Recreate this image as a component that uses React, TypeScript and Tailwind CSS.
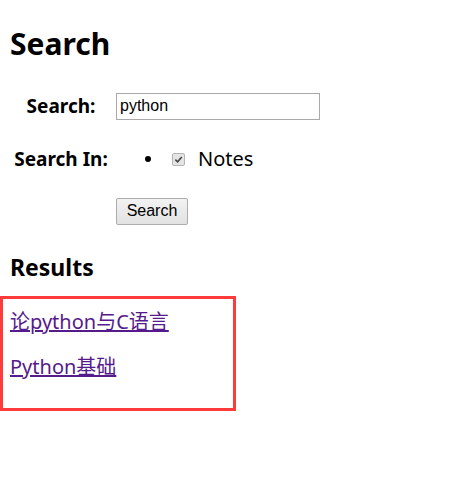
export default function App() {
  return (
    <div className="min-h-screen bg-white pl-[10px] pt-[24px] text-black" style={{ fontFamily: '"Noto Sans", "Noto Sans CJK SC", sans-serif' }}>
      {/* --- Search form --- */}
      <h1 className="text-[30px] font-bold leading-[40px]">Search</h1>

      <div className="mt-[18px] grid grid-cols-[102px_auto] items-center">
        <div className="flex h-[48px] items-center justify-center text-[19px] font-bold">Search:</div>
        <div className="flex h-[48px] items-center pl-[4px]">
          <input
            type="text"
            defaultValue="python"
            className="h-[27px] w-[204px] border border-[#a9a9a9] px-[3px] text-[16px] outline-none"
            style={{ fontFamily: '"Liberation Sans", Arial, sans-serif' }}
          />
        </div>

        <div className="flex h-[58px] items-center justify-center text-[19px] font-bold">Search In:</div>
        <div className="flex h-[58px] items-center pl-[4px]">
          <div className="flex items-center pl-[29px] text-[20px]">
            <span className="h-[6px] w-[6px] rounded-full bg-black" />
            <span className="ml-[21px] mr-[13px] flex h-[13px] w-[13px] items-center justify-center rounded-[2px] border border-[#b5b5b5] bg-[#e4e4e4]">
              <svg viewBox="0 0 10 10" className="h-[9px] w-[9px]">
                <path d="M1.5 5.2 L4 7.6 L8.6 2.2" fill="none" stroke="#444" strokeWidth="1.8" />
              </svg>
            </span>
            Notes
          </div>
        </div>

        <div />
        <div className="flex h-[46px] items-center pl-[4px]">
          <button
            className="h-[27px] w-[72px] rounded-[2px] border border-[#adadad] bg-gradient-to-b from-[#f2f2f2] to-[#e2e2e2] text-[16px]"
            style={{ fontFamily: '"Liberation Sans", Arial, sans-serif' }}
          >
            Search
          </button>
        </div>
      </div>

      {/* --- Results --- */}
      <h3 className="mt-[19px] text-[23px] font-bold leading-[28px]">Results</h3>

      <div className="-ml-[10px] mt-[15px] w-[236px] border-[3px] border-[#ff3b3b] pb-[27px] pl-[7px] pt-[9px]">
        <a href="#" className="block text-[20px] leading-[28px] text-[#551a8b] underline">论python与C语言</a>
        <a href="#" className="mt-[17px] block text-[20px] leading-[28px] text-[#551a8b] underline">Python基础</a>
      </div>
    </div>
  );
}
